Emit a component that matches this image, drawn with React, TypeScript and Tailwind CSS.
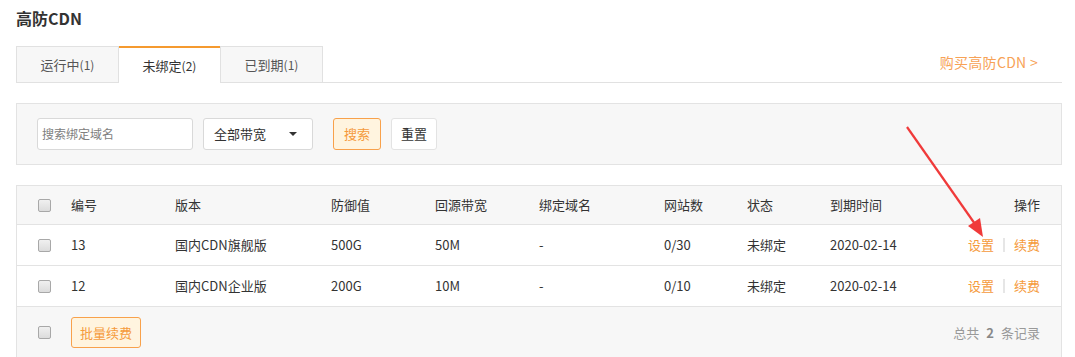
import React from "react";

const font = { fontFamily: '"Noto Sans CJK SC", "Noto Sans", sans-serif' };

function Checkbox() {
  return (
    <span className="inline-block h-[13px] w-[13px] rounded-[2px] border border-[#a8a8a8] bg-gradient-to-b from-[#f0f0f0] to-[#dcdcdc]" />
  );
}

const gridCols =
  "grid grid-cols-[33px_104px_156px_104px_104px_125px_83px_83px_1fr_auto] items-center pl-[21px] pr-[21px]";

const rows = [
  { id: "13", ver: "国内CDN旗舰版", def: "500G", bw: "50M", dom: "-", sites: "0/30", st: "未绑定", exp: "2020-02-14" },
  { id: "12", ver: "国内CDN企业版", def: "200G", bw: "10M", dom: "-", sites: "0/10", st: "未绑定", exp: "2020-02-14" },
];

export default function App() {
  return (
    <div className="relative h-[357px] w-[1075px] overflow-hidden bg-white text-[13px] text-[#333]" style={font}>
      <div className="px-[16px] pr-[13px]">
        <div className="pt-[7px] text-[16px] font-bold leading-[22px] text-[#333]">高防CDN</div>
        <div className="mt-[17px] flex items-end border-b border-[#e1e1e1]">
          <div className="mb-[-1px] flex h-[37px] w-[103px] items-center justify-center border border-[#e1e1e1] bg-[#f7f7f7] text-[13px] text-[#555]">
            运行中<span className="text-[12px]">(1)</span>
          </div>
          <div className="mb-[-1px] flex h-[37px] w-[101px] items-center justify-center border-t-2 border-[#f59a2f] bg-white text-[13px] text-[#333]">
            未绑定<span className="text-[12px]">(2)</span>
          </div>
          <div className="mb-[-1px] flex h-[37px] w-[103px] items-center justify-center border border-[#e1e1e1] bg-[#f7f7f7] text-[13px] text-[#555]">
            已到期<span className="text-[12px]">(1)</span>
          </div>
          <div className="flex-1" />
          <div className="mb-[9px] mr-[24px] text-[14px] tracking-[0.3px] text-[#f7a256]">购买高防CDN &gt;</div>
        </div>

        <div className="mt-[20px] flex h-[62px] items-center border border-[#e3e3e3] bg-[#f7f7f7] pl-[20px]">
          <div className="flex h-[32px] w-[156px] items-center rounded-[3px] border border-[#d9d9d9] bg-white pl-[4px] text-[12px] text-[#808080]">
            搜索绑定域名
          </div>
          <div className="ml-[10px] flex h-[32px] w-[110px] items-center justify-between rounded-[3px] border border-[#d9d9d9] bg-white pl-[10px] pr-[15px] text-[13px] text-[#333]">
            全部带宽
            <span className="h-0 w-0 border-l-[4px] border-r-[4px] border-t-[4px] border-l-transparent border-r-transparent border-t-[#333]" />
          </div>
          <div className="ml-[20px] flex h-[32px] w-[48px] items-center justify-center rounded-[3px] border border-[#f8a14b] bg-[#fff4df] text-[13px] text-[#f59a3c]">
            搜索
          </div>
          <div className="ml-[10px] flex h-[32px] w-[46px] items-center justify-center rounded-[3px] border border-[#e3e3e3] bg-white text-[13px] text-[#333]">
            重置
          </div>
        </div>

        <div className="mt-[20px] border border-[#e3e3e3]">
          <div className={`${gridCols} h-[39px] border-b border-[#e3e3e3] bg-[#f7f7f7]`}>
            <Checkbox />
            <div>编号</div>
            <div>版本</div>
            <div>防御值</div>
            <div>回源带宽</div>
            <div>绑定域名</div>
            <div>网站数</div>
            <div>状态</div>
            <div>到期时间</div>
            <div className="text-right">操作</div>
          </div>
          {rows.map((r) => (
            <div key={r.id} className={`${gridCols} h-[41px] border-b border-[#e3e3e3] bg-white`}>
              <Checkbox />
              <div>{r.id}</div>
              <div>{r.ver}</div>
              <div>{r.def}</div>
              <div>{r.bw}</div>
              <div>{r.dom}</div>
              <div>{r.sites}</div>
              <div>{r.st}</div>
              <div>{r.exp}</div>
              <div className="flex items-center text-[#f59a3c]">
                <span>设置</span>
                <span className="mx-[9px] h-[14px] w-[2px] bg-[#e6e6e6]" />
                <span>续费</span>
              </div>
            </div>
          ))}
          <div className="flex h-[60px] items-start bg-[#f7f7f7] pl-[21px] pr-[21px] pt-[10px]">
            <div className="flex h-[31px] w-[33px] items-center">
              <Checkbox />
            </div>
            <div className="flex h-[31px] w-[70px] items-center justify-center rounded-[3px] border border-[#f8a14b] bg-[#fff4df] text-[13px] text-[#f59a3c]">
              批量续费
            </div>
            <div className="flex-1" />
            <div className="flex h-[31px] items-center text-[13px] text-[#999]">
              总共<b className="mx-[7px] text-[#888]">2</b>条记录
            </div>
          </div>
        </div>
      </div>

      <svg className="absolute left-0 top-0" width="1075" height="357" viewBox="0 0 1075 357">
        <line x1="907" y1="127" x2="975" y2="224" stroke="#f03a3a" strokeWidth="2.2" />
        <polygon points="983,237 968,226 980,218" fill="#f03a3a" />
      </svg>
    </div>
  );
}
